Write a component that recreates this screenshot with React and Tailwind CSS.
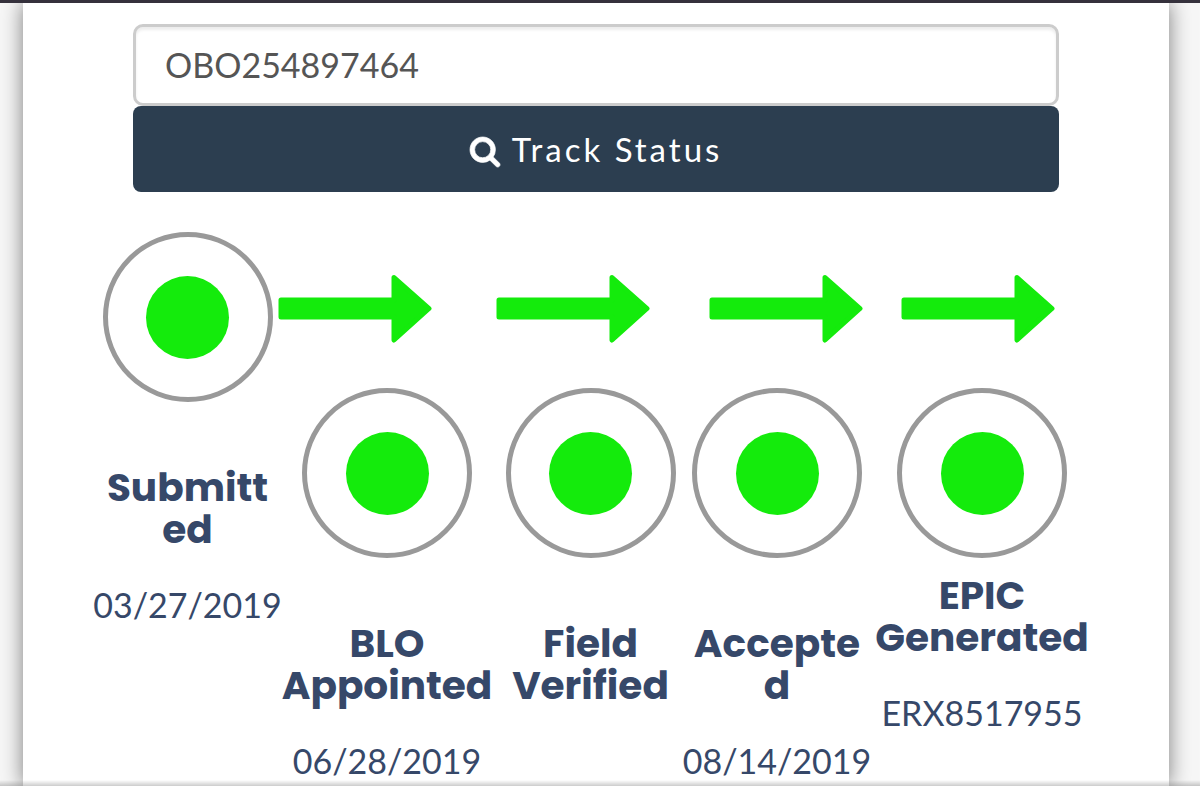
import React, { useState } from 'react'

const steps = [
    { title: ['Submitt', 'ed'], value: '03/27/2019' },
    { title: ['BLO', 'Appointed'], value: '06/28/2019', arrow: 'ml-0' },
    { title: ['Field', 'Verified'], value: '', arrow: 'ml-0' },
    { title: ['Accepte', 'd'], value: '08/14/2019', arrow: 'ml-6' },
    { title: ['EPIC', 'Generated'], value: 'ERX8517955', arrow: 'ml-8', compact: true },
]

const SearchIcon = () => (
    <svg
        className="w-[30px] h-[30px] mt-1 overflow-visible"
        viewBox="64 128 1664 1664"
        fill="currentColor"
        stroke="currentColor"
        strokeWidth="40"
        aria-hidden="true"
    >
        <path d="M1216 832q0-185-131.500-316.500t-316.500-131.500-316.500 131.500-131.500 316.500 131.500 316.500 316.500 131.500 316.500-131.500 131.500-316.500zm512 832q0 52-38 90t-90 38q-54 0-90-38l-343-342q-179 124-399 124-143 0-273.500-55.500t-225-150-150-225-55.500-273.500 55.500-273.500 150-225 225-150 273.500-55.500 273.500 55.500 225 150 150 225 55.500 273.500q0 220-124 399l343 343q37 37 37 90z" />
    </svg>
)

const Arrow = ({ className }) => (
    <svg className={`block w-[154px] h-[70px] ${className}`} viewBox="0 0 154 70" aria-hidden="true">
        <path
            d="M3 26H116V3.500L151 34.500L116 66V43H3Z"
            fill="#14eb0c"
            stroke="#14eb0c"
            strokeWidth="5"
            strokeLinejoin="round"
        />
    </svg>
)

const Step = ({ step }) => (
    <li className="min-w-0">
        {step.arrow && (
            <div className="h-[156px] pt-[42px]">
                <Arrow className={step.arrow} />
            </div>
        )}
        <div className="flex flex-col items-center text-center text-[#364869]">
            <div className="flex items-center justify-center w-[170px] h-[170px] shrink-0 rounded-full border-[5px] border-[#999999]">
                <div className="w-[83px] h-[83px] rounded-full bg-[#14eb0c]"></div>
            </div>
            <h3 className={`${step.compact ? 'mt-[17px]' : 'mt-[65px]'} font-[Poppins,Inter,sans-serif] text-[39px] leading-[42px] font-bold whitespace-nowrap`}>
                {step.title.map((line) => (
                    <span key={line} className="block">{line}</span>
                ))}
            </h3>
            <p className="mt-[34px] text-[34px] leading-[40px] whitespace-nowrap">{step.value}</p>
        </div>
    </li>
)

const App = () => {
    const [reference, setReference] = useState('OBO254897464');

    return (
        <div className="min-h-screen flex flex-col overflow-hidden bg-[#f7f7f7] font-[Lato,sans-serif]">
            {/* Bottom edge of the top bar */}
            <div className="relative z-10 h-[3px] bg-[#35313c]"></div>

            <main className="flex-1 ml-[23px] mr-[31px] px-[74px] pt-[21px] bg-white shadow-[0_0_20px_rgba(0,0,0,0.5)]">
                <form className="px-9" onSubmit={(e) => e.preventDefault()}>
                    <input
                        type="text"
                        aria-label="Reference ID"
                        value={reference}
                        onChange={(e) => setReference(e.target.value)}
                        className="block w-full h-[82px] px-[29px] pb-0.5 text-[34px] text-[#555555] bg-white border-[3px] border-[#cccccc] rounded-[10px] shadow-[inset_0_3px_3px_rgba(0,0,0,0.075)] outline-none"
                    />
                    <button
                        type="submit"
                        className="flex items-center justify-center gap-3 w-full h-[86px] pt-0.5 rounded-lg bg-[#2c3e50] text-white text-[33px] tracking-[3px]"
                    >
                        <SearchIcon />
                        Track Status
                    </button>
                </form>

                <ol className="grid grid-cols-[181fr_218fr_189fr_184fr_226fr] pt-10">
                    {steps.map((step) => (
                        <Step key={step.title.join('')} step={step} />
                    ))}
                </ol>
            </main>

            {/* Shade above the bottom bar */}
            <div className="fixed inset-x-0 bottom-0 h-[6px] bg-gradient-to-b from-transparent to-black/20"></div>
        </div>
    )
}

export default App
